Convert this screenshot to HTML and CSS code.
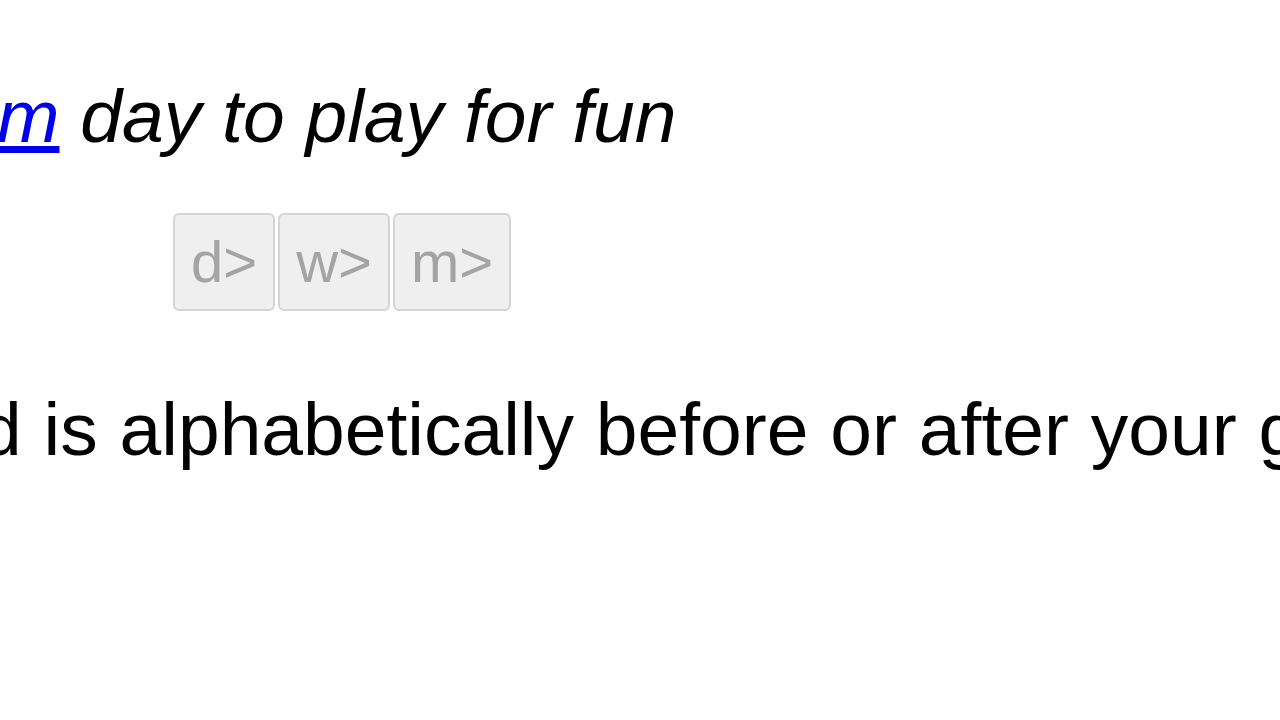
FILE: index.html
```html
<!DOCTYPE html>
<html lang="en">
<head>
<meta charset="utf-8">
<title>Word game</title>
<link rel="stylesheet" href="styles.css">
</head>
<body>
<main class="page">
  <p class="lead"><em><a href="#" class="link">m</a> day to play for fun</em></p>
  <div class="nav">
    <button class="btn" disabled>d&gt;</button>
    <button class="btn" disabled>w&gt;</button>
    <button class="btn" disabled>m&gt;</button>
  </div>
  <p class="hint">d is alphabetically before or after your g</p>
</main>
</body>
</html>
```
FILE: styles.css
```css
html, body {
  margin: 0;
  padding: 0;
  background: #ffffff;
}
body {
  width: 1280px;
  height: 720px;
  overflow: hidden;
  font-family: "Liberation Sans", Arial, sans-serif;
  color: #000;
}
.page {
  display: flex;
  flex-direction: column;
  align-items: flex-start;
  padding-top: 73px;
}
.lead {
  margin: 0;
  font-size: 75px;
  line-height: 86px;
  white-space: nowrap;
  margin-left: -3px;
}
.link {
  color: #0000ee;
}
.nav {
  display: flex;
  gap: 3px;
  margin-top: 54px;
  margin-left: 173px;
}
.btn {
  font-family: "Liberation Sans", Arial, sans-serif;
  font-size: 58px;
  line-height: 1;
  height: 98px;
  padding: 0 16px;
  background: #efefef;
  color: #a4a4a4;
  border: 2px solid #d4d4d4;
  border-radius: 6px;
}
.hint {
  margin: 75px 0 0 0;
  font-size: 75px;
  line-height: 86px;
  white-space: nowrap;
  word-spacing: 1px;
  margin-left: -20px;
}
```
